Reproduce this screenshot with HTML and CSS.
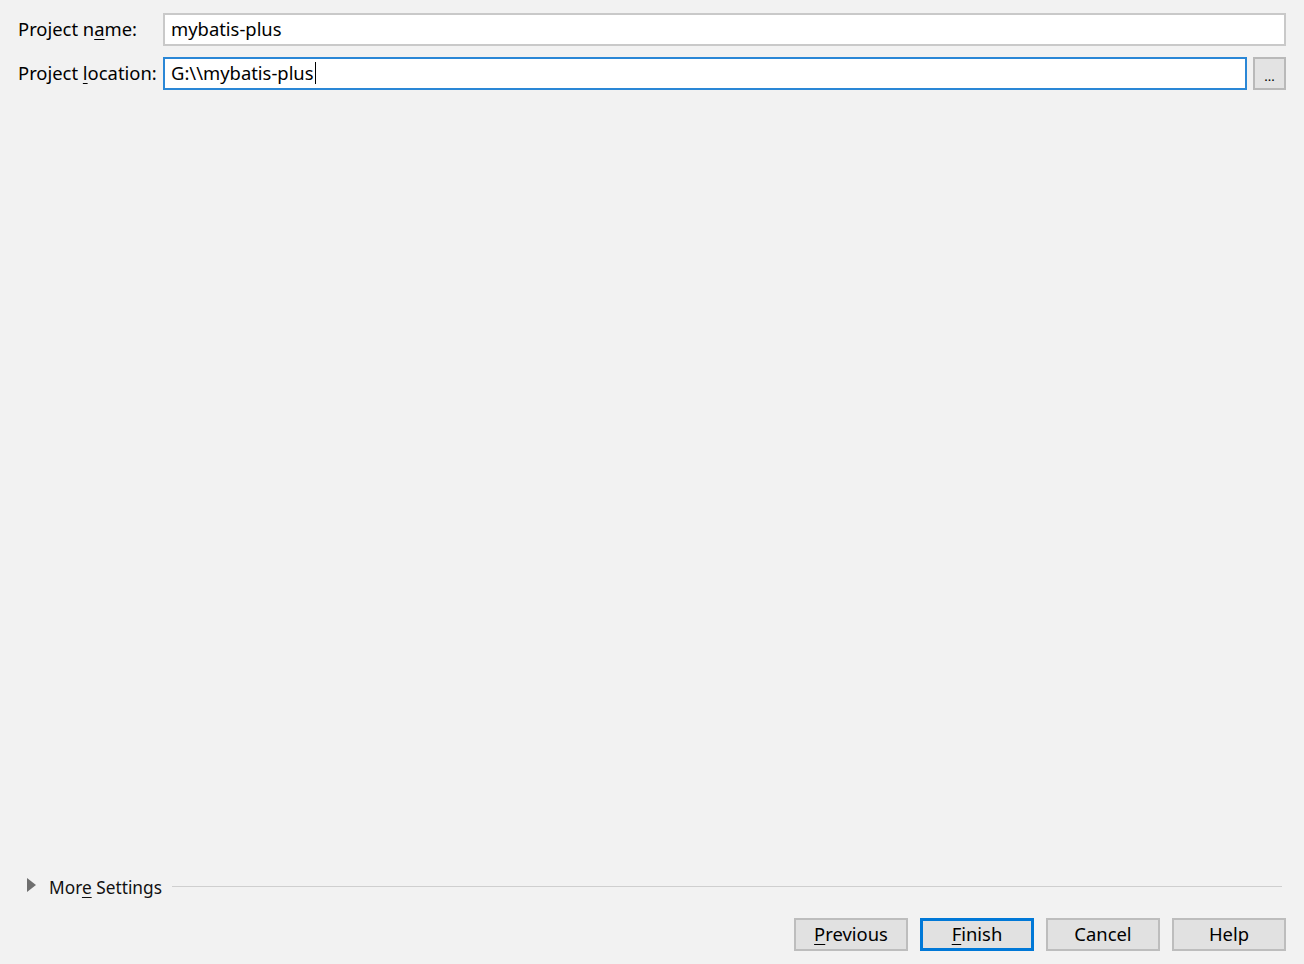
FILE: index.html
```html
<!DOCTYPE html>
<html>
<head>
<meta charset="utf-8">
<link rel="stylesheet" href="styles.css">
</head>
<body>
<div class="dialog">
  <div class="form">
    <div class="row">
      <label class="label">Project n<u>a</u>me:</label>
      <div class="field">mybatis-plus</div>
    </div>
    <div class="row">
      <label class="label">Project <u>l</u>ocation:</label>
      <div class="field focused">G:\\mybatis-plus<span class="caret"></span></div>
      <button class="browse">...</button>
    </div>
  </div>
  <div class="spacer"></div>
  <div class="more">
    <svg class="tri" width="9" height="14" viewBox="0 0 9 14"><polygon points="0,0 9,7 0,14" fill="#6f6f6f"/></svg>
    <span class="more-text">Mor<u>e</u> Settings</span>
    <div class="rule"></div>
  </div>
  <div class="buttons">
    <button class="btn"><u>P</u>revious</button>
    <button class="btn default"><u>F</u>inish</button>
    <button class="btn">Cancel</button>
    <button class="btn">Help</button>
  </div>
</div>
</body>
</html>
```
FILE: styles.css
```css
html, body {
  margin: 0;
  padding: 0;
  background: #f2f2f2;
}
body {
  font-family: "Noto Sans", "Open Sans", sans-serif;
  font-size: 18.4px;
  color: #000;
}
.dialog {
  height: 100vh;
  box-sizing: border-box;
  padding: 13px 18px 13px 18px;
  display: flex;
  flex-direction: column;
}
.form {
  display: flex;
  flex-direction: column;
  gap: 11px;
}
.row {
  display: flex;
  align-items: center;
  gap: 6px;
}
.label {
  width: 139px;
  flex: none;
  white-space: nowrap;
  line-height: 32px;
  margin-top: -1px;
}
.label u, .more-text u, .btn u {
  text-decoration-thickness: 1px;
  text-underline-offset: 3px;
}
.field {
  flex: 1;
  height: 33px;
  box-sizing: border-box;
  border: 2px solid #c9c9c9;
  background: #fff;
  padding: 0 6px 2px 6px;
  line-height: 27px;
  white-space: nowrap;
  display: flex;
  align-items: center;
}
.focused {
  height: 33px;
  border-color: #2a87d6;
}
.caret {
  display: inline-block;
  width: 1px;
  height: 22px;
  background: #000;
  margin-left: 1px;
}
.browse {
  width: 33px;
  height: 33px;
  flex: none;
  box-sizing: border-box;
  border: 2px solid #b9b9b9;
  background: #e3e3e3;
  font-family: inherit;
  font-size: 13px;
  padding: 0;
  line-height: 1;
  padding-top: 5px;
}
.spacer {
  flex: 1;
}
.more {
  display: flex;
  align-items: center;
  margin-left: 9px;
  height: 24px;
  position: relative;
  top: 1px;
}
.tri {
  flex: none;
  position: relative;
  top: -1px;
}
.more-text {
  margin-left: 13px;
  font-size: 17.3px;
  white-space: nowrap;
  color: #111;
  position: relative;
  top: 1px;
}
.rule {
  flex: 1;
  height: 1px;
  background: #cfcfcf;
  margin-left: 10px;
  margin-right: 4px;
}
.buttons {
  display: flex;
  justify-content: flex-end;
  gap: 12px;
  margin-top: 21px;
}
.btn {
  width: 114px;
  height: 33px;
  box-sizing: border-box;
  border: 2px solid #bdbdbd;
  background: #e1e1e1;
  font-family: inherit;
  font-size: 18.4px;
  color: #000;
  padding: 0 0 2px 0;
}
.btn.default {
  border: 3px solid #0078d7;
}
```
